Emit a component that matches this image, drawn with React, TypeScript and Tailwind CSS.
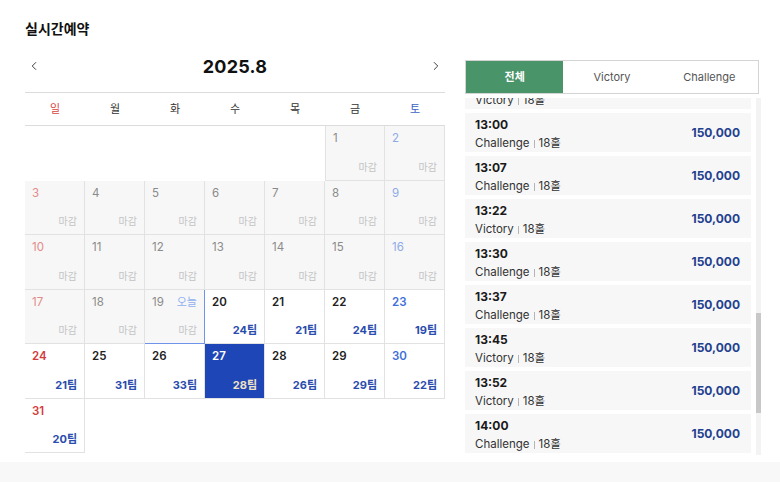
import { useEffect, useRef } from 'react'
import { ChevronLeft, ChevronRight } from 'lucide-react'

const FONT = { fontFamily: '"Inter", "Noto Sans CJK KR", sans-serif' }

const WEEK = ['일', '월', '화', '수', '목', '금', '토']

// team counts for open days
const TEAMS: Record<number, number> = {
  20: 24, 21: 21, 22: 24, 23: 19, 24: 21, 25: 31, 26: 33,
  27: 28, 28: 26, 29: 29, 30: 22, 31: 20,
}

const TODAY = 19
const SELECTED = 27
const FIRST_COL = 5 // Aug 1 2025 is Friday

const slots: [string, string][] = [
  ['10:45', 'Victory'], ['10:52', 'Challenge'], ['11:00', 'Victory'], ['11:07', 'Challenge'],
  ['11:15', 'Victory'], ['11:22', 'Challenge'], ['11:30', 'Victory'], ['11:37', 'Challenge'],
  ['11:45', 'Victory'], ['11:52', 'Challenge'], ['12:00', 'Victory'], ['12:07', 'Challenge'],
  ['12:15', 'Victory'], ['12:22', 'Challenge'], ['12:30', 'Victory'], ['12:37', 'Challenge'],
  ['12:45', 'Challenge'], ['12:52', 'Victory'],
  ['13:00', 'Challenge'], ['13:07', 'Challenge'], ['13:22', 'Victory'], ['13:30', 'Challenge'],
  ['13:37', 'Challenge'], ['13:45', 'Victory'], ['13:52', 'Victory'], ['14:00', 'Challenge'],
  ['14:07', 'Victory'], ['14:15', 'Challenge'], ['14:22', 'Victory'], ['14:30', 'Challenge'],
]

function DayCell({ day, col }: { day: number | null; col: number }) {
  if (day === null) return <div className="h-[54.5px]" />
  const past = day <= TODAY
  const selected = day === SELECTED
  const today = day === TODAY

  let numColor = 'text-[#222]'
  if (past) {
    numColor = col === 0 ? 'text-[#e38a8a]' : col === 6 ? 'text-[#8eaae6]' : 'text-[#8a8a8a]'
  } else {
    numColor = col === 0 ? 'text-[#d33c3c]' : col === 6 ? 'text-[#3f6fd8]' : 'text-[#222]'
  }
  if (selected) numColor = 'text-white'

  const bg = selected ? 'bg-[#1f46b6]' : past ? 'bg-[#f7f7f7]' : 'bg-white'
  const border = today
    ? 'border-r border-b border-r-[#6f93ea] border-b-[#6f93ea]'
    : 'border-r border-b border-[#e2e2e2]'
  const leftBorder = day === 1 && col !== 0 ? 'border-l border-l-[#e2e2e2]' : ''

  return (
    <div className={`h-[54.5px] flex flex-col justify-between px-[7px] pt-[4px] pb-[3px] ${bg} ${border} ${leftBorder}`}>
      <div className="flex items-center justify-between">
        <span className={`text-[11.5px] ${past ? 'font-normal' : 'font-semibold'} ${numColor}`}>{day}</span>
        {today && <span className="text-[11px] text-[#8fb0ee]">오늘</span>}
      </div>
      <div className="text-right">
        {past ? (
          <span className="text-[10px] text-[#c4c4c4]">마감</span>
        ) : (
          <span className={`text-[11px] font-bold ${selected ? 'text-[#efe2c4]' : 'text-[#2a4cad]'}`}>
            {TEAMS[day]}팀
          </span>
        )}
      </div>
    </div>
  )
}

function Calendar() {
  const cells: (number | null)[] = []
  for (let i = 0; i < FIRST_COL; i++) cells.push(null)
  for (let d = 1; d <= 31; d++) cells.push(d)

  return (
    <div className="w-[420px] shrink-0">
      <div className="flex items-center justify-between h-[36px]">
        <ChevronLeft className="w-[14px] h-[14px] ml-[2px] text-[#333]" strokeWidth={1.6} />
        <span className="text-[18px] font-bold text-[#111] tracking-[0.2px]">2025.8</span>
        <ChevronRight className="w-[14px] h-[14px] mr-[2px] text-[#333]" strokeWidth={1.6} />
      </div>
      <div className="mt-[8px] grid grid-cols-7 h-[34px] border-t border-b border-[#dcdcdc] items-center">
        {WEEK.map((w, i) => (
          <span
            key={w}
            className={`text-center text-[11px] ${i === 0 ? 'text-[#d9453f]' : i === 6 ? 'text-[#3b63c4]' : 'text-[#333]'}`}
          >
            {w}
          </span>
        ))}
      </div>
      <div className="grid grid-cols-7">
        {cells.map((d, i) => (
          <DayCell key={i} day={d} col={i % 7} />
        ))}
      </div>
    </div>
  )
}

function TeeList() {
  const ref = useRef<HTMLDivElement>(null)
  useEffect(() => {
    if (ref.current) ref.current.scrollTop = 18 * 43 - 15
  }, [])

  return (
    <div className="mt-[4px] flex gap-[5px] h-[357px]">
      <div ref={ref} className="w-[286px] h-full overflow-hidden">
        <div className="flex flex-col gap-[4px]">
          {slots.map(([t, course]) => (
            <div key={t} className="h-[39px] shrink-0 bg-[#f7f7f8] flex items-center justify-between pl-[10px] pr-[11px]">
              <div className="flex flex-col leading-none mt-[3px]">
                <span className="text-[12px] font-bold text-[#1a1a1a]">{t}</span>
                <span className="mt-[7px] flex items-center text-[11.5px] text-[#333]">
                  {course}
                  <span className="mx-[4px] w-px h-[8px] bg-[#b5b5b5]" />
                  18홀
                </span>
              </div>
              <span className="text-[12px] font-bold text-[#23408e]">150,000</span>
            </div>
          ))}
        </div>
      </div>
      {/* scrollbar */}
      <div className="relative w-[5px] h-full bg-[#f3f3f3]">
        <div className="absolute left-0 top-[215px] w-[5px] h-[100px] bg-[#c8c8c8]" />
      </div>
    </div>
  )
}

export default function App() {
  return (
    <div className="w-[780px] h-[482px] flex flex-col bg-white" style={FONT}>
      <div className="flex-1 pl-[25px] pr-[19px] pt-[19px]">
        <h1 className="text-[14px] font-semibold text-[#111] leading-[20px]">실시간예약</h1>
        <div className="mt-[9px] flex gap-[20px]">
          <Calendar />
          <div className="pt-[12px] shrink-0">
            <div className="grid grid-cols-3 w-[294px] h-[34px] border border-[#d4d4d4] text-[11px]">
              <button className="bg-[#4a946a] text-white font-bold">전체</button>
              <button className="text-[#555]">Victory</button>
              <button className="text-[#555]">Challenge</button>
            </div>
            <TeeList />
          </div>
        </div>
      </div>
      <div className="h-[20px] bg-[#f8f8f8]" />
    </div>
  )
}
